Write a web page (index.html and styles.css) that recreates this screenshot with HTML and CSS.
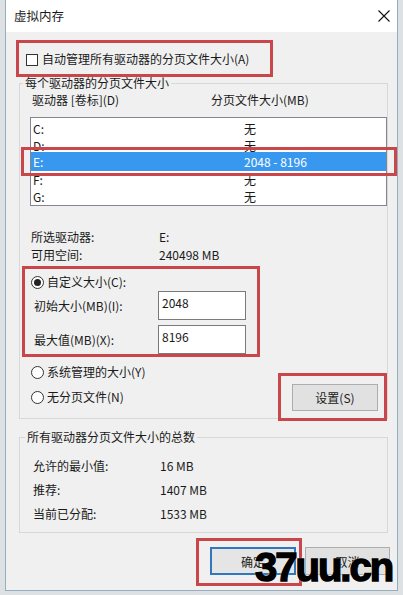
FILE: index.html
```html
<!DOCTYPE html>
<html lang="zh-CN">
<head>
    <meta charset="UTF-8">
    <meta name="viewport" content="width=device-width, initial-scale=1.0">
    <title>虚拟内存</title>
    <link rel="stylesheet" href="styles.css">
</head>
<body>
    <div class="window">
        <div class="titlebar">
            <span class="title">虚拟内存</span>
            <svg class="close" width="12" height="12" viewBox="0 0 12 12">
                <path d="M0.5 0.5 L11.5 11.5 M11.5 0.5 L0.5 11.5" stroke="#111" stroke-width="1.1" fill="none"/>
            </svg>
        </div>

        <div class="content">
            <!-- Auto manage checkbox (red annotation box) -->
            <div class="mark auto-box">
                <span class="checkbox"></span>
                <span>自动管理所有驱动器的分页文件大小(A)</span>
            </div>

            <fieldset class="group drives">
                <legend>每个驱动器的分页文件大小</legend>
                <div class="list-head">
                    <span class="col-drive">驱动器 [卷标](D)</span>
                    <span>分页文件大小(MB)</span>
                </div>
                <div class="listbox">
                    <div class="row"><span class="col-drive">C:</span><span>无</span></div>
                    <div class="row"><span class="col-drive">D:</span><span>无</span></div>
                    <div class="row selected"><span class="col-drive">E:</span><span>2048 - 8196</span></div>
                    <div class="row"><span class="col-drive">F:</span><span>无</span></div>
                    <div class="row"><span class="col-drive">G:</span><span>无</span></div>
                    <div class="mark row-mark"></div>
                </div>

                <div class="info">
                    <span>所选驱动器:</span><span>E:</span>
                    <span>可用空间:</span><span>240498 MB</span>
                </div>

                <!-- Custom size (red annotation box) -->
                <div class="mark custom-box">
                    <div class="radio-row">
                        <span class="radio checked"></span>
                        <span>自定义大小(C):</span>
                    </div>
                    <div class="field-row">
                        <span>初始大小(MB)(I):</span>
                        <div class="input">2048</div>
                    </div>
                    <div class="field-row second">
                        <span>最大值(MB)(X):</span>
                        <div class="input">8196</div>
                    </div>
                </div>

                <div class="lower">
                    <div class="radios">
                        <div class="radio-row"><span class="radio"></span><span>系统管理的大小(Y)</span></div>
                        <div class="radio-row"><span class="radio"></span><span>无分页文件(N)</span></div>
                    </div>
                    <div class="mark set-box">
                        <div class="btn set-btn">设置(S)</div>
                    </div>
                </div>
            </fieldset>

            <fieldset class="group totals">
                <legend>所有驱动器分页文件大小的总数</legend>
                <div class="total-grid">
                    <span>允许的最小值:</span><span>16 MB</span>
                    <span>推荐:</span><span>1407 MB</span>
                    <span>当前已分配:</span><span>1533 MB</span>
                </div>
            </fieldset>

            <div class="buttons">
                <div class="mark ok-box">
                    <div class="btn ok-btn">确定</div>
                </div>
                <div class="btn cancel-btn">取消</div>
            </div>
        </div>

        <!-- Site watermark -->
        <div class="watermark">37uu.cn</div>
    </div>
</body>
</html>
```

FILE: styles.css
```css
body {
    margin: 0;
    background: #dde1e4;
    font-family: "Noto Sans CJK SC", "Noto Sans", sans-serif;
    font-size: 12px;
    color: #1a1a1a;
}

.window {
    position: relative;
    margin-left: 5px;
    width: 391px;
    height: 590px;
    background: #f0f0f0;
    border: 1px solid #93aebe;
    border-top: none;
    overflow: hidden;
}

/* Title bar */
.titlebar {
    height: 32px;
    background: #fff;
    display: flex;
    align-items: center;
    justify-content: space-between;
    padding: 0 7px 0 8px;
}

.title {
    line-height: 16px;
    font-size: 12.5px;
}

.close {
    display: block;
    margin-top: -1px;
}

/* Red annotation boxes */
.mark {
    border: 3px solid #c9464b;
    box-sizing: border-box;
}

.auto-box {
    margin: 8px 0 0 10px;
    width: 257px;
    height: 37px;
    display: flex;
    align-items: center;
    padding-left: 7px;
    gap: 4px;
}

.checkbox {
    width: 12px;
    height: 12px;
    border: 1px solid #333;
    background: #fff;
    box-sizing: border-box;
    margin-top: 2px;
}

/* Group boxes */
.group {
    margin: 0 0 0 13px;
    width: 369px;
    box-sizing: border-box;
    padding: 0;
    border: 1px solid #d8d8d8;
    min-width: 0;
}

.group legend {
    padding: 0 2px;
    line-height: 16px;
}

.drives {
    margin-top: -2px;
}

.drives legend {
    margin-left: 3px;
}

.list-head {
    display: flex;
    line-height: 16px;
    padding: 1px 0 0 12px;
}

.list-head .col-drive {
    width: 179px;
}

.listbox {
    position: relative;
    margin: 9px 0 0 10px;
    width: 357px;
    height: 89px;
    box-sizing: border-box;
    border: 1px solid #828790;
    background: #fff;
    padding-top: 2px;
}

.row {
    display: flex;
    height: 17px;
    line-height: 17px;
    padding-left: 2px;
}

.row .col-drive {
    width: 211px;
}

.row.selected {
    position: relative;
    margin-top: -2px;
    height: 19px;
    line-height: 19px;
    background: #3898f0;
    color: #fff;
}

.row-mark {
    position: absolute;
    top: 29px;
    left: -10px;
    width: 376px;
    height: 29px;
}

.info {
    display: grid;
    grid-template-columns: 128px auto;
    line-height: 18px;
    margin: 22px 0 0 11px;
}

/* Custom size block */
.custom-box {
    margin: 2px 0 0 2px;
    width: 238px;
    height: 91px;
    padding: 4px 0 0 6px;
}

.radio-row {
    display: flex;
    align-items: center;
    gap: 3px;
    line-height: 18px;
}

.radio {
    width: 13px;
    height: 13px;
    border: 1px solid #333;
    border-radius: 50%;
    background: #fff;
    box-sizing: border-box;
    display: flex;
    align-items: center;
    justify-content: center;
}

.radio.checked::after {
    content: "";
    width: 7px;
    height: 7px;
    border-radius: 50%;
    background: #222;
}

.field-row {
    display: grid;
    grid-template-columns: 124px 88px;
    align-items: center;
    margin-left: 3px;
}

.field-row.second {
    margin-top: 5px;
}

.input {
    height: 29px;
    box-sizing: border-box;
    border: 1px solid #7a7a7a;
    background: #fff;
    padding: 2px 0 0 3px;
    line-height: 18px;
}

/* Other radios and set button */
.lower {
    display: flex;
    align-items: flex-start;
}

.radios {
    margin: 6px 0 0 11px;
    display: flex;
    flex-direction: column;
    gap: 7px;
}

.set-box {
    margin: 16px 0 -3px auto;
    width: 109px;
    height: 48px;
    padding: 8px 0 0 11px;
}

.btn {
    box-sizing: border-box;
    display: flex;
    align-items: center;
    justify-content: center;
    background: #e1e1e1;
    border: 1px solid #adadad;
}

.set-btn {
    width: 86px;
    height: 27px;
}

/* Totals group */
.totals {
    margin-top: 10px;
}

.totals legend {
    margin-left: 5px;
}

.total-grid {
    display: grid;
    grid-template-columns: 127px auto;
    line-height: 24px;
    padding: 9px 0 6px 13px;
}

/* Bottom buttons */
.buttons {
    display: flex;
    justify-content: flex-end;
    align-items: flex-start;
    padding-right: 7px;
    margin-top: 5px;
}

.ok-box {
    width: 106px;
    height: 48px;
    padding: 6px 0 0 11px;
}

.ok-btn {
    width: 86px;
    height: 28px;
    border: 2px solid #2f78bf;
    background: #e5e5e5;
}

.cancel-btn {
    width: 85px;
    height: 28px;
    margin: 9px 0 0 3px;
}

.watermark {
    position: absolute;
    left: 249px;
    top: 547px;
    font-family: "Liberation Sans", Arial, sans-serif;
    font-weight: bold;
    font-size: 40px;
    line-height: 1;
    letter-spacing: -2px;
    color: #000;
    -webkit-text-stroke: 1.5px #000;
    text-shadow: 0 0 2px #fff, 0 0 2px #fff;
}
```
